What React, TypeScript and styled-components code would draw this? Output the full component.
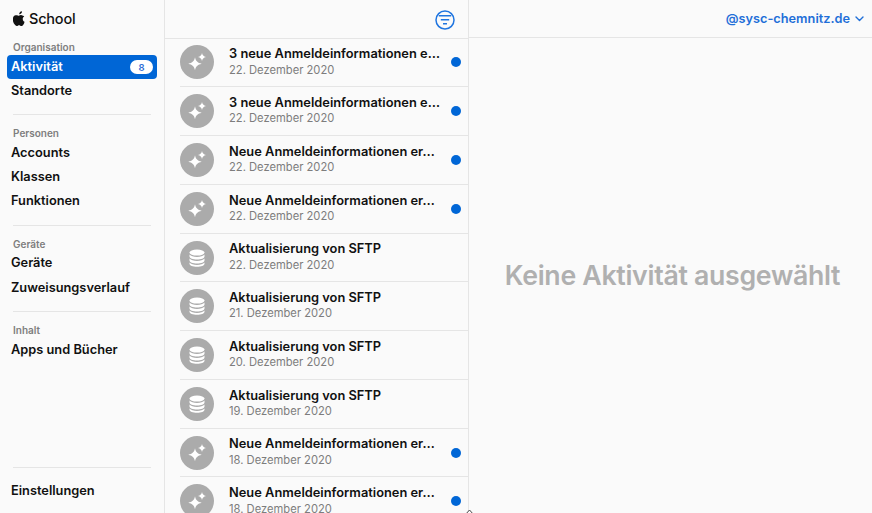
import React from "react";
import styled, { createGlobalStyle } from "styled-components";

const Global = createGlobalStyle`
  html, body { margin: 0; padding: 0; height: 100%; overflow: hidden; background: #fafafa; }
  body { font-family: Inter, "Liberation Sans", sans-serif; color: #111; }
  #root { height: 100%; }
`;

const Page = styled.div`
  position: relative;
  display: grid;
  grid-template-columns: 165px 304px 1fr;
  height: 513px;
  width: 872px;
  overflow: hidden;
`;

const Sidebar = styled.aside`
  display: flex;
  flex-direction: column;
  border-right: 1px solid #e5e5e5;
  padding: 0 7px;
  box-sizing: border-box;
  height: 513px;
`;

const Brand = styled.div`
  flex: none;
  display: flex;
  align-items: center;
  gap: 3px;
  box-sizing: border-box;
  height: 35.9px;
  padding: 1.5px 0 0 6px;
  font-size: 14.5px;
  font-weight: 500;
  letter-spacing: -0.2px;
`;

const Section = styled.section`
  display: flex;
  flex-direction: column;
  padding-bottom: 10.9px;
`;

const Divider = styled.hr`
  border: 0;
  border-top: 1px solid #e5e5e5;
  margin: 0 6px 7px 6px;
`;

const SectionTitle = styled.div`
  font-size: 10px;
  font-weight: 600;
  color: #7e7e7e;
  height: 19.1px;
  line-height: 22px;
  padding-left: 6px;
`;

const NavItem = styled.div<{ $active?: boolean }>`
  display: flex;
  align-items: center;
  justify-content: space-between;
  box-sizing: border-box;
  height: 24.2px;
  padding: 0 4px 2px;
  border-radius: 4px;
  font-size: 12.8px;
  font-weight: 600;
  color: ${(p) => (p.$active ? "#fff" : "#111")};
  background: ${(p) => (p.$active ? "#0066d6" : "transparent")};
`;

const Badge = styled.span`
  display: inline-flex;
  align-items: center;
  justify-content: center;
  width: 23px;
  height: 14px;
  margin-top: 2px;
  border-radius: 7px;
  background: #fff;
  color: #2f6fd6;
  font-size: 9.5px;
  font-weight: 600;
`;

const Footer = styled.div`
  margin-top: auto;
  display: flex;
  flex-direction: column;
`;

const FooterItem = styled(NavItem)`
  height: 45px;
  padding-bottom: 1px;
`;

const FooterRule = styled.hr`
  border: 0;
  border-top: 1px solid #e5e5e5;
  margin: 0 6px;
`;

const ListColumn = styled.main`
  display: flex;
  flex-direction: column;
  border-right: 1px solid #e5e5e5;
  height: 513px;
  overflow: hidden;
  box-sizing: border-box;
`;

const ListHeader = styled.header`
  flex: none;
  display: flex;
  align-items: center;
  justify-content: flex-end;
  box-sizing: border-box;
  height: 38.5px;
  padding: 2px 13px 0 0;
  border-bottom: 1px solid #e5e5e5;
`;

const Row = styled.div`
  flex: none;
  display: flex;
  align-items: center;
  box-sizing: border-box;
  height: 48.78px;
  padding-bottom: 0.8px;
  margin-left: 15px;
  border-bottom: 1px solid #e5e5e5;
`;

const Avatar = styled.div`
  flex: none;
  width: 34px;
  height: 34px;
  border-radius: 50%;
  background: #ababab;
  display: flex;
  align-items: center;
  justify-content: center;
  margin: 1px 15px 0 0;
`;

const RowText = styled.div`
  flex: none;
  width: 211px;
  display: flex;
  flex-direction: column;
`;

const RowTitle = styled.div`
  font-size: 12.85px;
  font-weight: 600;
  line-height: 15.3px;
  color: #111;
  white-space: nowrap;
`;

const RowDate = styled.div`
  font-size: 11.2px;
  line-height: 16px;
  color: #7d7d7d;
`;

const Dot = styled.span`
  flex: none;
  width: 10px;
  height: 10px;
  border-radius: 50%;
  background: #0066d6;
  margin: 1px 0 0 11px;
`;

const Cursor = styled.svg`
  position: absolute;
  left: 466px;
  bottom: 0;
`;

const Detail = styled.div`
  display: flex;
  flex-direction: column;
  height: 513px;
`;

const DetailHeader = styled.header`
  flex: none;
  display: flex;
  align-items: center;
  justify-content: flex-end;
  gap: 5px;
  box-sizing: border-box;
  height: 38px;
  padding-right: 8px;
  border-bottom: 1px solid #e5e5e5;
  font-size: 12.75px;
  font-weight: 600;
  color: #1f6fd8;
`;

const Empty = styled.div`
  flex: 1;
  display: flex;
  align-items: center;
  justify-content: center;
  font-size: 26.7px;
  font-weight: 600;
  letter-spacing: -0.3px;
  color: #b0b0b0;
  padding: 0 2px 2px 6px;
  white-space: nowrap;
`;

const Apple = () => (
  <svg width="13" height="15" viewBox="0 0 170 200" fill="#111" aria-hidden="true">
    <path d="M150 157c-3 7-6 13-10 19-5 8-10 13-13 16-5 5-11 7-17 7-4 0-9-1-15-4-6-2-11-4-16-4s-10 1-16 4c-6 2-11 4-15 4-6 0-12-2-18-8-4-3-8-9-14-17-6-8-10-18-14-29-4-12-6-23-6-34 0-13 3-24 8-33 4-7 10-13 17-17s15-6 23-6c4 0 10 1 18 4 7 3 12 4 14 4 2 0 7-2 16-5 8-3 15-4 21-3 15 1 27 7 35 19-14 8-20 20-20 34 0 11 4 21 12 28 4 3 8 6 12 8-1 3-2 6-3 8zM119 5c0 9-3 17-10 25-8 9-17 15-28 14 0-1 0-2 0-4 0-8 4-17 10-24 3-4 7-7 12-9 5-3 9-4 14-5 1 1 2 2 2 3z" />
  </svg>
);

const Sparkles = () => (
  <svg width="20" height="20" viewBox="0 0 20 20" fill="#fff" aria-hidden="true">
    <path d="M8 5.300C8.700 9.100 10.600 10.900 14.700 11.800 C10.600 12.700 8.700 14.500 8 18.300 C7.300 14.500 5.400 12.700 1.300 11.800 C5.400 10.900 7.300 9.100 8 5.300Z" />
    <path d="M15 1C15.400 3.200 16.600 4.400 19 5 C16.600 5.600 15.400 6.800 15 9 C14.600 6.800 13.400 5.600 11 5 C13.400 4.400 14.600 3.200 15 1Z" />
  </svg>
);

const Database = () => (
  <svg width="20" height="20" viewBox="0 0 20 20" fill="none" aria-hidden="true">
    <ellipse cx="10" cy="4.600" rx="7.500" ry="3" fill="#fff" />
    <path d="M2.500 6.600v2c0 1.700 3.400 3 7.500 3s7.500-1.300 7.500-3v-2c-1.300 1.600-4.200 2.400-7.500 2.400s-6.200-.8-7.500-2.400z" fill="#fff" />
    <path d="M2.500 10.400v2.200c0 1.700 3.400 3 7.500 3s7.500-1.300 7.500-3v-2.200c-1.300 1.600-4.200 2.500-7.500 2.500s-6.200-.9-7.500-2.500z" fill="#fff" />
    <path d="M2.500 14.400v1.400c0 1.700 3.400 3 7.500 3s7.500-1.300 7.500-3v-1.400c-1.300 1.600-4.200 2.500-7.500 2.500s-6.200-.9-7.500-2.500z" fill="#fff" />
  </svg>
);

const FilterIcon = () => (
  <svg width="20" height="20" viewBox="0 0 20 20" fill="none" stroke="#1f75e0" strokeWidth="1.500" aria-hidden="true">
    <circle cx="10" cy="10" r="9" />
    <path d="M3.800 5.800h12.400M5.800 9.800h8.400M8 13.800h4" />
  </svg>
);

const Chevron = () => (
  <svg width="9" height="6" viewBox="0 0 9 6" fill="none" stroke="#1f6fd8" strokeWidth="1.400" strokeLinecap="round" strokeLinejoin="round" aria-hidden="true">
    <path d="M1 1l3.500 3.500L8 1" />
  </svg>
);

type Item = { kind: "spark" | "db"; title: string; date: string; unread?: boolean };

const items: Item[] = [
  { kind: "spark", title: "3 neue Anmeldeinformationen e…", date: "22. Dezember 2020", unread: true },
  { kind: "spark", title: "3 neue Anmeldeinformationen e…", date: "22. Dezember 2020", unread: true },
  { kind: "spark", title: "Neue Anmeldeinformationen er…", date: "22. Dezember 2020", unread: true },
  { kind: "spark", title: "Neue Anmeldeinformationen er…", date: "22. Dezember 2020", unread: true },
  { kind: "db", title: "Aktualisierung von SFTP", date: "22. Dezember 2020" },
  { kind: "db", title: "Aktualisierung von SFTP", date: "21. Dezember 2020" },
  { kind: "db", title: "Aktualisierung von SFTP", date: "20. Dezember 2020" },
  { kind: "db", title: "Aktualisierung von SFTP", date: "19. Dezember 2020" },
  { kind: "spark", title: "Neue Anmeldeinformationen er…", date: "18. Dezember 2020", unread: true },
  { kind: "spark", title: "Neue Anmeldeinformationen er…", date: "18. Dezember 2020", unread: true },
];

export default function App() {
  return (
    <Page>
      <Global />
      <Sidebar>
        <Brand>
          <Apple />
          School
        </Brand>
        <Section>
          <SectionTitle>Organisation</SectionTitle>
          <NavItem $active>
            Aktivität
            <Badge>8</Badge>
          </NavItem>
          <NavItem>Standorte</NavItem>
        </Section>
        <Divider />
        <Section>
          <SectionTitle>Personen</SectionTitle>
          <NavItem>Accounts</NavItem>
          <NavItem>Klassen</NavItem>
          <NavItem>Funktionen</NavItem>
        </Section>
        <Divider />
        <Section>
          <SectionTitle>Geräte</SectionTitle>
          <NavItem>Geräte</NavItem>
          <NavItem>Zuweisungsverlauf</NavItem>
        </Section>
        <Divider />
        <Section>
          <SectionTitle>Inhalt</SectionTitle>
          <NavItem>Apps und Bücher</NavItem>
        </Section>
        <Footer>
          <FooterRule />
          <FooterItem>Einstellungen</FooterItem>
        </Footer>
      </Sidebar>
      <ListColumn>
        <ListHeader>
          <FilterIcon />
        </ListHeader>
        {items.map((item, i) => (
          <Row key={i}>
            <Avatar>{item.kind === "spark" ? <Sparkles /> : <Database />}</Avatar>
            <RowText>
              <RowTitle>{item.title}</RowTitle>
              <RowDate>{item.date}</RowDate>
            </RowText>
            {item.unread && <Dot />}
          </Row>
        ))}
      </ListColumn>
      <Detail>
        <DetailHeader>
          @sysc-chemnitz.de
          <Chevron />
        </DetailHeader>
        <Empty>Keine Aktivität ausgewählt</Empty>
      </Detail>
      <Cursor width="7" height="4" viewBox="0 0 7 4" aria-hidden="true">
        <path d="M.8 4 3.500 1 6.200 4" fill="#fff" stroke="#444" strokeWidth="1" />
      </Cursor>
    </Page>
  );
}
